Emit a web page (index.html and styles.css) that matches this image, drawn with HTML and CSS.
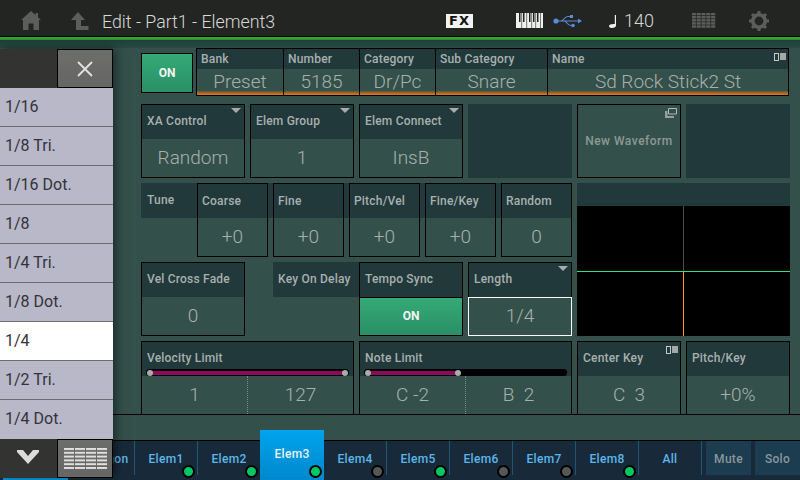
FILE: index.html
```html
<!DOCTYPE html>
<html lang="en">
<head>
    <meta charset="UTF-8">
    <title>Edit - Part1 - Element3</title>
    <link rel="stylesheet" href="styles.css">
</head>
<body>
    <div class="screen">
        <!-- top bar -->
        <header class="topbar">
            <svg class="ico-home" width="20" height="20" viewBox="0 0 20 20"><path d="M10 0 L14.5 4 V2 H17 V6.2 L20 9 H18 V19 H12.5 V12.5 H7.5 V19 H2 V9 H0 Z" fill="#5c5e5c"/></svg>
            <svg class="ico-up" width="18" height="18" viewBox="0 0 18 18"><path d="M7 0 L14 8 H10 V14 H17.5 V18 H5 V8 H0 Z" fill="#5c5e5c"/></svg>
            <span class="page-title">Edit - Part1 - Element3</span>
            <span class="fx-badge">FX</span>
            <svg class="ico-keys" width="27" height="15" viewBox="0 0 27 15">
                <rect width="27" height="15" fill="#f0f0f0"/>
                <path d="M3 0h1.500v9H3zM7 0h1.500v9H7zM13 0h1.500v9H13zM17 0h1.500v9H17zM21 0h1.500v9H21z" fill="#222"/>
                <path d="M5.500 0h.6v15h-.6zM10.500 0h.6v15h-.6zM15.500 0h.6v15h-.6zM19.500 0h.6v15h-.6zM24 0h.6v15H24z" fill="#222"/>
            </svg>
            <svg class="ico-usb" width="29" height="14" viewBox="0 0 29 14">
                <circle cx="3" cy="7" r="2.600" fill="#5a8ad8"/>
                <path d="M3 7 H27 M8 7 C11 7 11 2.500 15 2.500 H17 M11 7 C14 7 14 11.500 18 11.500 H19" stroke="#5a8ad8" stroke-width="1.200" fill="none"/>
                <path d="M25 4.500 L29 7 L25 9.500 Z M17 1 H20 V4 H17 Z" fill="#5a8ad8"/>
                <circle cx="20" cy="11.500" r="1.800" fill="#5a8ad8"/>
            </svg>
            <svg class="ico-note" width="9" height="13" viewBox="0 0 9 13"><path d="M6.800 0 H8 V10.500 C8 12 6.500 13 4 13 C1.500 13 1 11.800 1 11 C1 9.800 3 8.800 6.800 9 Z" fill="#f0f0f0"/></svg>
            <span class="tempo">140</span>
            <svg class="ico-grid" width="24" height="15" viewBox="0 0 24 15">
                <defs><pattern id="headGrid" width="4.800" height="3.100" patternUnits="userSpaceOnUse"><rect width="4" height="2.300" fill="#5c5e5c"/></pattern></defs>
                <rect width="24" height="15" fill="url(#headGrid)"/>
            </svg>
            <svg class="ico-gear" width="20" height="20" viewBox="0 0 20 20">
                <circle cx="10" cy="10" r="6.200" fill="none" stroke="#5c5e5c" stroke-width="3.600"/>
                <path d="M10 0v20M0 10h20M3 3l14 14M17 3L3 17" stroke="#5c5e5c" stroke-width="3" stroke-dasharray="3 14"/>
            </svg>
        </header>
        <div class="accent"></div>
        <div class="strip"></div>

        <main class="sheet">
            <!-- voice row -->
            <div class="voice-row">
                <button class="on-btn">ON</button>
                <div class="voice">
                    <div class="voice-cell w-bank"><div class="voice-head">Bank</div><div class="voice-val">Preset</div></div>
                    <div class="voice-cell w-num"><div class="voice-head">Number</div><div class="voice-val">5185</div></div>
                    <div class="voice-cell w-num"><div class="voice-head">Category</div><div class="voice-val">Dr/Pc</div></div>
                    <div class="voice-cell w-sub"><div class="voice-head">Sub Category</div><div class="voice-val">Snare</div></div>
                    <div class="voice-cell w-name">
                        <div class="voice-head">Name</div><div class="voice-val">Sd Rock Stick2 St</div>
                        <span class="pair-mark"><i></i><b></b></span>
                    </div>
                </div>
            </div>

            <!-- parameter grid -->
            <div class="params">
                <div class="cell"><div class="head">XA Control</div><div class="val">Random</div><span class="tri"></span></div>
                <div class="cell"><div class="head">Elem Group</div><div class="val">1</div><span class="tri"></span></div>
                <div class="cell"><div class="head">Elem Connect</div><div class="val">InsB</div><span class="tri"></span></div>
                <div class="blank"></div>
                <div class="cell cell-flat">
                    New Waveform
                    <svg class="ico-window" width="12" height="10" viewBox="0 0 12 10"><path d="M3.500 .5h8v5.500h-8z" fill="none" stroke="#b4b8b6"/><path d="M0 3h2.500v5h6.500v2H0z" fill="#9a9e9c"/></svg>
                </div>
                <div class="blank"></div>

                <div class="tune">
                    <div class="tune-label">Tune</div>
                    <div class="cell"><div class="head">Coarse</div><div class="val">+0</div></div>
                    <div class="cell"><div class="head">Fine</div><div class="val">+0</div></div>
                    <div class="cell"><div class="head">Pitch/Vel</div><div class="val">+0</div></div>
                    <div class="cell"><div class="head">Fine/Key</div><div class="val">+0</div></div>
                    <div class="cell"><div class="head">Random</div><div class="val">0</div></div>
                </div>
                <div class="graph">
                    <div class="graph-head"></div>
                    <svg class="graph-plot" width="213" height="130" viewBox="0 0 213 130">
                        <rect width="213" height="130" fill="#000"/>
                        <path d="M106.500 0V65" stroke="#4a4e4c"/>
                        <path d="M106.500 65V130" stroke="#f0a020"/>
                        <path d="M0 65.500H213" stroke="#36e080"/>
                    </svg>
                </div>

                <div class="cell"><div class="head">Vel Cross Fade</div><div class="val">0</div></div>
                <div class="delay"><div class="delay-head">Key On Delay</div></div>
                <div class="cell">
                    <div class="head">Tempo Sync</div>
                    <div class="val val-on">ON</div>
                </div>
                <div class="cell">
                    <div class="head">Length</div>
                    <div class="val val-picked">1/4</div>
                    <span class="tri"></span>
                </div>

                <div class="cell cell-wide">
                    <div class="head head-slider">
                        Velocity Limit
                        <div class="track"><div class="fill" style="width:100%"></div></div>
                    </div>
                    <div class="val val-split"><span>1</span><span>127</span></div>
                </div>
                <div class="cell cell-wide">
                    <div class="head head-slider">
                        Note Limit
                        <div class="track"><div class="fill" style="width:46.4%"></div></div>
                    </div>
                    <div class="val val-split"><span>C -2</span><span>B&nbsp;&nbsp;2</span></div>
                </div>
                <div class="cell cell-low">
                    <div class="head">Center Key</div><div class="val">C&nbsp;&nbsp;3</div>
                    <span class="pair-mark"><i></i><b></b></span>
                </div>
                <div class="cell cell-low"><div class="head">Pitch/Key</div><div class="val">+0%</div></div>
            </div>
        </main>

        <div class="gap-strip"></div>

        <!-- element tabs -->
        <nav class="tabs">
            <span class="tab-hidden"></span>
            <div class="tab">Common</div>
            <div class="tab">Elem1<i class="dot on"></i></div>
            <div class="tab">Elem2<i class="dot on"></i></div>
            <div class="tab tab-active">Elem3<i class="dot on"></i></div>
            <div class="tab">Elem4<i class="dot"></i></div>
            <div class="tab">Elem5<i class="dot on"></i></div>
            <div class="tab">Elem6<i class="dot"></i></div>
            <div class="tab">Elem7<i class="dot"></i></div>
            <div class="tab">Elem8<i class="dot on"></i></div>
            <div class="tab">All</div>
            <div class="tab-tool">Mute</div>
            <div class="tab-tool">Solo</div>
        </nav>

        <!-- value picker lying over the page -->
        <aside class="picker">
            <div class="picker-bar">
                <div class="picker-dark"></div>
                <div class="picker-btn">
                    <svg width="18" height="18" viewBox="0 0 18 18"><path d="M2 2L16 16M16 2L2 16" stroke="#e2e2e0" stroke-width="1.800"/></svg>
                </div>
            </div>
            <ul class="picker-list">
                <li>1/16</li>
                <li>1/8 Tri.</li>
                <li>1/16 Dot.</li>
                <li>1/8</li>
                <li>1/4 Tri.</li>
                <li>1/8 Dot.</li>
                <li class="picked">1/4</li>
                <li>1/2 Tri.</li>
                <li>1/4 Dot.</li>
            </ul>
            <div class="picker-bar">
                <div class="picker-dark picker-chevron">
                    <svg width="22" height="14" viewBox="0 0 22 14"><path d="M0 0H6L11 6L16 0H22V2L11 14L0 2Z" fill="#dcdcda"/></svg>
                </div>
                <div class="picker-btn">
                    <svg width="43" height="21" viewBox="0 0 43 21">
                        <defs><pattern id="listGrid" width="11" height="3.800" patternUnits="userSpaceOnUse"><rect width="10" height="2" fill="#e0e0de"/></pattern></defs>
                        <rect width="43" height="21" fill="url(#listGrid)"/>
                    </svg>
                </div>
            </div>
        </aside>
    </div>
</body>
</html>
```

FILE: styles.css
```css
* {
    box-sizing: border-box;
}

body {
    margin: 0;
    padding: 0;
    background: #000;
    font-family: Roboto, "Open Sans", sans-serif;
}

.screen {
    width: 800px;
    height: 480px;
    position: relative;
    overflow: hidden;
    display: flex;
    flex-direction: column;
    background: #34504a;
}

/* top bar */
.topbar {
    height: 37px;
    flex: none;
    padding-top: 5px;
    display: flex;
    align-items: center;
    background: #232523;
    border-bottom: 1px solid #000;
    color: #d8d8d6;
}

.ico-home { margin-left: 21px; }
.ico-up { margin-left: 30px; margin-top: 1px; }

.page-title {
    margin-left: 13px;
    margin-top: 1px;
    width: 344px;
    font-size: 17.800px;
    font-weight: 300;
    white-space: nowrap;
}

.fx-badge {
    width: 27px;
    height: 14px;
    background: #f2f2f2;
    color: #111;
    font-family: "DejaVu Sans", sans-serif;
    font-size: 13px;
    font-weight: 700;
    line-height: 14px;
    text-align: center;
    letter-spacing: 1px;
}

.ico-keys { margin-left: 43px; }
.ico-usb { margin-left: 10px; }
.ico-note { margin-left: 26px; margin-top: 1px; }

.tempo {
    margin-left: 7px;
    width: 29px;
    font-size: 18px;
    font-weight: 300;
}

.ico-grid { margin-left: 39px; }
.ico-gear { margin-left: 33px; }

.accent {
    height: 3px;
    flex: none;
    background: linear-gradient(#35b035, #2c8c30);
}

.strip {
    height: 8px;
    flex: none;
    background: linear-gradient(#1e4038, #2a4a44);
}

/* main sheet */
.sheet {
    height: 367px;
    flex: none;
    padding-left: 141px;
    border-bottom: 1px solid #000;
}

.voice-row {
    height: 56px;
    display: flex;
    align-items: flex-start;
    position: relative;
}

.on-btn {
    width: 52px;
    height: 40px;
    margin-top: 5px;
    padding: 0;
    background: linear-gradient(#34aa76, #2a8f66);
    border: 1px solid #000;
    color: #f4f4f4;
    font: 700 12px Roboto, sans-serif;
}

.voice {
    display: flex;
    height: 48px;
    margin-left: 3px;
    border-top: 1px solid #000;
    border-bottom: 1px solid #000;
    border-right: 1px solid #000;
}

.voice-cell {
    position: relative;
    border-left: 1px solid #000;
    display: flex;
    flex-direction: column;
}

.w-bank { width: 87px; }
.w-num { width: 76px; }
.w-sub { width: 112px; }
.w-name { width: 241px; }

.voice-head {
    height: 20px;
    padding-left: 4px;
    background: #21393b;
    color: #a8b0ae;
    font-size: 12px;
    font-weight: 500;
    line-height: 20px;
    letter-spacing: .2px;
    white-space: nowrap;
}

.voice-val {
    flex: 1;
    text-align: center;
    background: linear-gradient(#34504a 0, #34504a 82%, #b86a20 94%, #e07818 100%);
    color: #a8b0ae;
    font-size: 19px;
    font-weight: 300;
    line-height: 25px;
    white-space: nowrap;
}

.pair-mark {
    position: absolute;
    top: 4px;
    right: 2px;
    display: flex;
    gap: 1px;
}

.pair-mark i {
    width: 5px;
    height: 8px;
    border: 1px solid #c4c8c6;
}

.pair-mark b {
    width: 6px;
    height: 7px;
    background: #a4a8a6;
}

/* parameter grid */
.params {
    display: grid;
    grid-template-columns: repeat(6, 104px);
    grid-template-rows: repeat(3, 74px) 73px;
    gap: 5px;
}

.cell {
    position: relative;
    display: flex;
    flex-direction: column;
    border: 1px solid #000;
    min-width: 0;
}

.head {
    height: 34px;
    flex: none;
    padding-left: 5px;
    background: #21393b;
    color: #a8b0ae;
    font-size: 12px;
    font-weight: 500;
    line-height: 33px;
    letter-spacing: .2px;
    white-space: nowrap;
}

.val {
    flex: 1;
    text-align: center;
    color: #a8b0ae;
    font-size: 19px;
    font-weight: 300;
    line-height: 37px;
    white-space: nowrap;
}

.tri {
    position: absolute;
    top: 3px;
    right: 3px;
    border-left: 5px solid transparent;
    border-right: 5px solid transparent;
    border-top: 5px solid #a8acaa;
}

.blank {
    background: #21393b;
}

.cell-flat {
    align-items: center;
    justify-content: center;
    color: #8e9896;
    font-size: 12px;
    font-weight: 500;
    letter-spacing: .5px;
    white-space: nowrap;
}

.ico-window {
    position: absolute;
    top: 3px;
    right: 3px;
}

/* tune group */
.tune {
    grid-column: span 4;
    display: flex;
    gap: 5px;
    background: linear-gradient(#21393b 35px, transparent 35px);
}

.tune .cell {
    width: 71px;
}

.tune .head {
    padding-left: 4px;
    line-height: 34px;
    background: none;
}

.tune-label {
    width: 51px;
    padding-left: 6px;
    color: #a8b0ae;
    font-size: 12px;
    font-weight: 500;
    line-height: 34px;
    letter-spacing: .2px;
}

.graph {
    grid-column: span 2;
    grid-row: span 2;
    display: flex;
    flex-direction: column;
}

.graph-head {
    height: 23px;
    background: #21393b;
}

.graph-plot {
    display: block;
}

/* key on delay has no box of its own */
.delay {
    grid-column: 2;
    margin: 0 -5px 0 23px;
}

.delay-head {
    height: 35px;
    padding-left: 5px;
    background: #21393b;
    color: #a8b0ae;
    font-size: 12px;
    font-weight: 500;
    line-height: 34px;
    letter-spacing: .2px;
    white-space: nowrap;
}

.val-on {
    background: linear-gradient(#34aa76, #2a8f66);
    border-top: 1px solid #000;
    color: #f4f4f4;
    font-size: 12px;
    font-weight: 700;
    line-height: 36px;
}

.val-picked {
    margin: 0 -1px -1px;
    border: 1px solid #fff;
    line-height: 35px;
}

/* limit sliders */
.cell-wide {
    grid-column: span 2;
    border-bottom: none;
}

.cell-low {
    border-bottom: none;
}

.head-slider {
    line-height: 32px;
    position: relative;
}

.track {
    position: absolute;
    left: 4px;
    right: 4px;
    bottom: 0;
    height: 7px;
    background: #000;
    border-radius: 4px;
    padding: 0 4px;
}

.fill {
    position: relative;
    height: 4px;
    top: 2px;
    background: #8c0a5a;
}

.fill::before,
.fill::after {
    content: "";
    position: absolute;
    top: -1px;
    width: 6px;
    height: 6px;
    border-radius: 50%;
    background: #a8acaa;
}

.fill::before { left: -3px; }
.fill::after { right: -3px; }

.val-split {
    display: grid;
    grid-template-columns: 105px 1fr;
}

.val-split span + span {
    border-left: 1px dotted #7a8c88;
}

.gap-strip {
    height: 25px;
    flex: none;
}

/* element tabs */
.tabs {
    height: 40px;
    flex: none;
    display: flex;
    align-items: stretch;
    background: #182a3a;
    border-top: 1px solid #000;
}

.tab-hidden {
    width: 65px;
    height: 4px;
    margin: 0 4px 0 3px;
    align-self: flex-end;
    background: #00a0e8;
}

.tab {
    position: relative;
    width: 63px;
    height: 34px;
    border-right: 1px solid #1f5676;
    color: #5cb6ea;
    font-size: 12px;
    font-weight: 500;
    line-height: 37px;
    letter-spacing: .3px;
    text-align: center;
}

.tab-active {
    width: 64px;
    height: 50px;
    margin-top: -11px;
    margin-left: -1px;
    border-right: none;
    background: linear-gradient(#00a4ee, #0088cc);
    color: #e8f4fc;
    line-height: 48px;
}

.dot {
    position: absolute;
    top: 24px;
    right: 2px;
    width: 13px;
    height: 13px;
    border: 2px solid #000;
    border-radius: 50%;
    background: #555856;
}

.dot.on {
    background: #00c864;
}

.tab-active .dot {
    top: 35px;
    right: 2px;
}

.tab-tool {
    width: 45px;
    height: 34px;
    margin-left: 4px;
    background: #1c3c50;
    color: #8a969c;
    font-size: 12px;
    font-weight: 500;
    line-height: 37px;
    letter-spacing: .3px;
    text-align: center;
}

/* picker */
.picker {
    position: absolute;
    top: 49px;
    left: 0;
    width: 113px;
    height: 427px;
    display: flex;
    flex-direction: column;
    background: #b8b8c8;
    box-shadow: 2px 0 10px rgba(0, 0, 0, .55);
}

.picker-bar {
    height: 39px;
    flex: none;
    display: flex;
}

.picker-dark {
    width: 57px;
    background: #333432;
}

.picker-chevron,
.picker-btn {
    display: flex;
    align-items: center;
    justify-content: center;
}

.picker-chevron svg {
    margin: -4px 1px 0 0;
}

.picker-btn {
    flex: 1;
    background: linear-gradient(#6c6e6a, #666664);
    border: 1px solid #000;
}

.picker-list {
    flex: 1;
    margin: 0;
    padding: 0;
    list-style: none;
}

.picker-list li {
    height: 39px;
    padding-left: 5px;
    border-bottom: 1px solid #6e6e70;
    color: #333338;
    font-size: 16px;
    line-height: 38px;
}

.picker-list li:last-child {
    border-bottom: none;
}

.picker-list .picked {
    background: #fff;
}
```
